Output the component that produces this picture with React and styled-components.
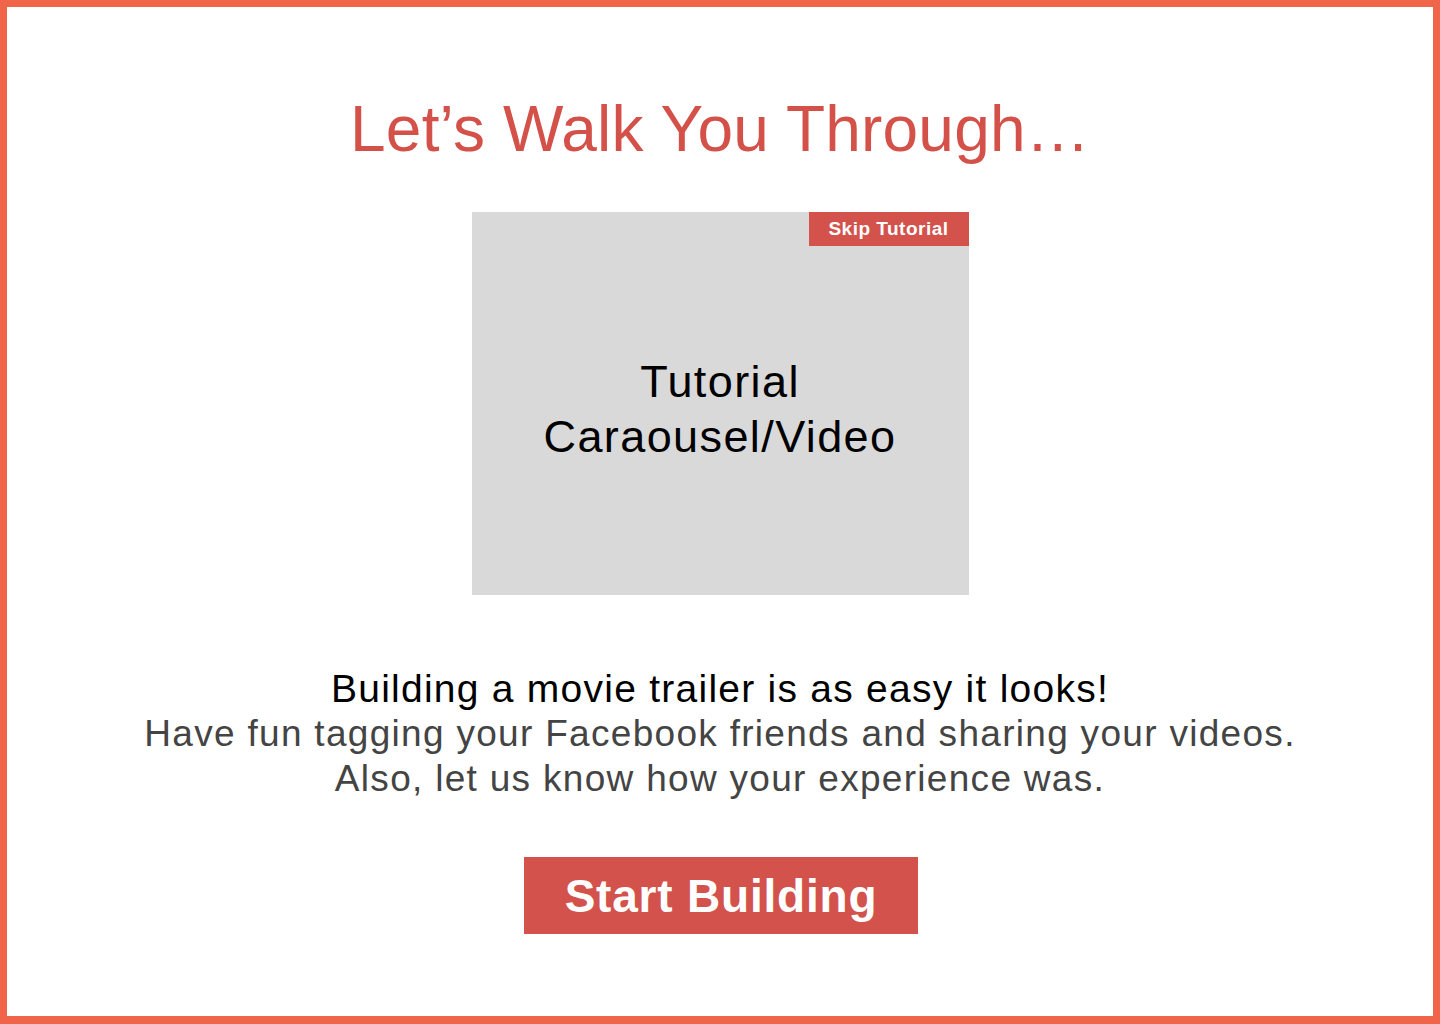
import React from "react";
import styled, { createGlobalStyle } from "styled-components";

const GlobalStyle = createGlobalStyle`
  html, body {
    margin: 0;
    padding: 0;
    background: #fff;
  }
  body {
    font-family: "Liberation Sans", Arial, Helvetica, sans-serif;
  }
`;

class App extends React.Component {
  render() {
    return (
      <>
        <GlobalStyle />
        <Frame>
          <Title>Let’s Walk You Through…</Title>
          <Media>
            <SkipButton type="button">Skip Tutorial</SkipButton>
            <MediaLabel>
              Tutorial
              <br />
              Caraousel/Video
            </MediaLabel>
          </Media>
          <Intro>
            <IntroLine $strong>Building a movie trailer is as easy it looks!</IntroLine>
            <IntroLine>Have fun tagging your Facebook friends and sharing your videos.</IntroLine>
            <IntroLine>Also, let us know how your experience was.</IntroLine>
          </Intro>
          <StartButton type="button">Start Building</StartButton>
        </Frame>
      </>
    );
  }
}

const Frame = styled.div`
  box-sizing: border-box;
  width: 100%;
  height: 1024px;
  border: 7px solid #f06449;
  border-bottom-width: 8px;
  display: flex;
  flex-direction: column;
  align-items: center;
  padding-top: 90px;
`;

const Title = styled.h1`
  margin: 0;
  font-size: 64px;
  line-height: 64px;
  font-weight: 400;
  color: #d4514a;
  letter-spacing: 0.2px;
`;

const Media = styled.div`
  position: relative;
  margin-top: 51px;
  width: 497px;
  height: 383px;
  background: #d9d9d9;
  display: flex;
  align-items: center;
  justify-content: center;
  padding-top: 10px;
  box-sizing: border-box;
`;

const SkipButton = styled.button`
  position: absolute;
  top: 0;
  right: 0;
  width: 160px;
  height: 34px;
  border: none;
  margin: 0;
  padding: 0;
  background: #d3524c;
  color: #fff;
  font-family: "Liberation Sans", Arial, sans-serif;
  font-weight: 700;
  font-size: 19px;
  letter-spacing: 0.5px;
  cursor: pointer;
`;

const MediaLabel = styled.div`
  font-size: 45px;
  line-height: 55px;
  letter-spacing: 1.4px;
  color: #000;
  text-align: center;
`;

const Intro = styled.div`
  margin-top: 71px;
  display: flex;
  flex-direction: column;
  align-items: center;
`;

const IntroLine = styled.p`
  margin: 0;
  font-size: ${(p) => (p.$strong ? "39px" : "37px")};
  line-height: 45px;
  letter-spacing: ${(p) => (p.$strong ? "1.25px" : "1.3px")};
  color: ${(p) => (p.$strong ? "#000" : "#444")};
  text-align: center;
`;

const StartButton = styled.button`
  margin-top: 56px;
  margin-left: 2px;
  width: 394px;
  height: 77px;
  border: none;
  padding: 0;
  background: #d3524c;
  color: #fff;
  font-family: "Liberation Sans", Arial, sans-serif;
  font-weight: 700;
  font-size: 46px;
  letter-spacing: 0.8px;
  cursor: pointer;
`;

export default App;
